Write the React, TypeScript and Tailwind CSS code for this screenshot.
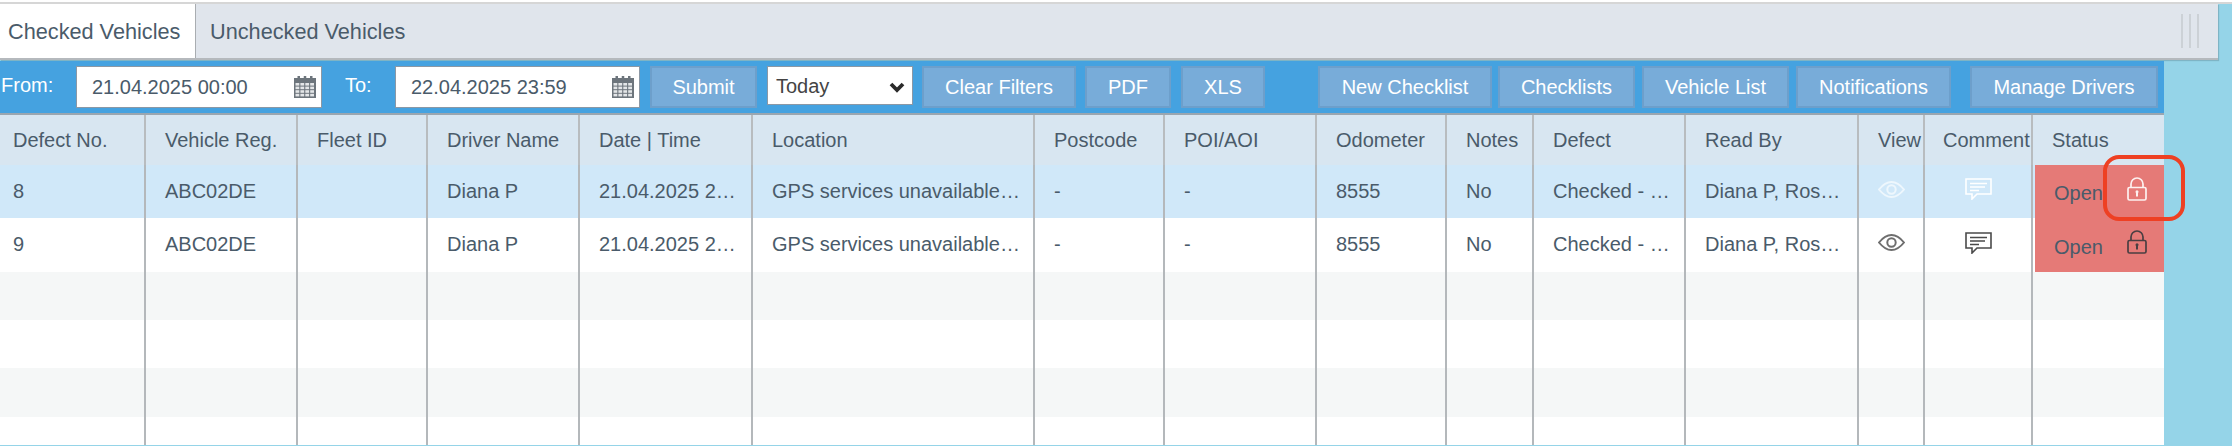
const columns = [
  { label: 'Defect No.', width: 'w-[146px]', pad: 'pl-[13px]' },
  { label: 'Vehicle Reg.', width: 'w-[152px]', pad: 'pl-[19px]' },
  { label: 'Fleet ID', width: 'w-[130px]', pad: 'pl-[19px]' },
  { label: 'Driver Name', width: 'w-[152px]', pad: 'pl-[19px]' },
  { label: 'Date | Time', width: 'w-[173px]', pad: 'pl-[19px]' },
  { label: 'Location', width: 'w-[282px]', pad: 'pl-[19px]' },
  { label: 'Postcode', width: 'w-[130px]', pad: 'pl-[19px]' },
  { label: 'POI/AOI', width: 'w-[152px]', pad: 'pl-[19px]' },
  { label: 'Odometer', width: 'w-[130px]', pad: 'pl-[19px]' },
  { label: 'Notes', width: 'w-[87px]', pad: 'pl-[19px]' },
  { label: 'Defect', width: 'w-[152px]', pad: 'pl-[19px]' },
  { label: 'Read By', width: 'w-[173px]', pad: 'pl-[19px]' },
  { label: 'View', width: 'w-[66px]', pad: 'pl-[19px]' },
  { label: 'Comment', width: 'w-[108px]', pad: 'pl-[18px]' },
  { label: 'Status', width: 'w-[131px]', pad: 'pl-[19px]' }
];

const rows = [
  {
    number: '8',
    height: 'h-[53px]',
    bg: 'bg-[#d0e8f9]',
    eyeColor: 'text-[#eef7fd]',
    commentColor: 'text-white',
    lockColor: 'text-[#fdf1f0]'
  },
  {
    number: '9',
    height: 'h-[54px]',
    bg: 'bg-white',
    eyeColor: 'text-[#6e6e6e]',
    commentColor: 'text-[#4a4a4a]',
    lockColor: 'text-[#4a3f42]'
  }
];

const emptyRows = [
  { height: 'h-[48px]', bg: 'bg-[#f5f7f7]' },
  { height: 'h-[48px]', bg: 'bg-white' },
  { height: 'h-[49px]', bg: 'bg-[#f5f7f7]' },
  { height: 'h-[28px]', bg: 'bg-white' }
];

const CalendarIcon = () => {
  const cells = [0, 1, 2, 3];
  return (
    <svg viewBox="0 0 22 22" className="h-[22px] w-[22px] shrink-0">
      <rect x="0" y="2" width="22" height="20" fill="#6d757c" />
      <rect x="3.5" y="0" width="2.5" height="4.5" fill="#6d757c" />
      <rect x="9.75" y="0" width="2.5" height="4.5" fill="#6d757c" />
      <rect x="16" y="0" width="2.5" height="4.5" fill="#6d757c" />
      {cells.map(r =>
        cells.map(c => (
          <rect
            key={`${r}-${c}`}
            x={1.5 + c * 4.9}
            y={7 + r * 3.6}
            width="3.8"
            height="2.6"
            fill="#e4e6e8"
          />
        ))
      )}
    </svg>
  );
};

const EyeIcon = ({ className }: { className: string }) => (
  <svg viewBox="0 0 27 17" fill="none" stroke="currentColor" className={`h-[17px] w-[27px] ${className}`}>
    <path d="M1 8.5C5 3.5 9 1 13.5 1S22 3.5 26 8.5C22 13.5 18 16 13.5 16S5 13.5 1 8.5Z" strokeWidth="2" />
    <circle cx="13.5" cy="8.5" r="4.2" strokeWidth="2" />
  </svg>
);

const CommentIcon = ({ className }: { className: string }) => (
  <svg viewBox="0 0 27 22" fill="none" stroke="currentColor" strokeWidth="1.6" className={`h-[22px] w-[27px] ${className}`}>
    <path d="M1 1H26V16H12L7 21V16H1Z" />
    <path d="M5 5.5H22M5 9H20M5 12.5H14" />
  </svg>
);

const LockIcon = ({ className }: { className: string }) => (
  <svg viewBox="0 0 20 24" fill="none" stroke="currentColor" strokeWidth="1.7" className={`h-[24px] w-[20px] ${className}`}>
    <path d="M4 11V7a6 6 0 0 1 12 0v4" />
    <rect x="1" y="10.5" width="18" height="12.5" rx="1.5" />
    <circle cx="10" cy="14.8" r="1.5" fill="currentColor" stroke="none" />
    <rect x="9" y="15" width="2" height="4.5" fill="currentColor" stroke="none" />
  </svg>
);

const ToolbarButton = ({ label, className }: { label: string; className: string }) => (
  <button className={`h-[42px] shrink-0 border-2 border-[#6d9fcb] bg-[#78acd9] text-[20px] text-white ${className}`}>
    {label}
  </button>
);

const DateField = ({ value, className }: { value: string; className: string }) => (
  <div className={`flex h-[42px] shrink-0 items-center border border-[#8b98a5] bg-white pl-[15px] pr-[5px] ${className}`}>
    <input
      readOnly
      value={value}
      className="w-full min-w-0 bg-transparent text-[20px] text-[#4a5b6a] outline-none"
    />
    <CalendarIcon />
  </div>
);

const App = () => {
  return (
    <div className="relative h-[446px] w-[2232px] overflow-hidden bg-[#95d4e8] font-['Liberation_Sans',sans-serif] text-[20px] text-[#4a5b6a]">
      <div className="h-[4px] border-b-2 border-[#d6d6d6] bg-white" />

      <div className="flex h-[56px] w-[2218px] items-stretch border-b-2 border-[#b5b9bd] bg-[#e0e5ec] shadow-[1px_1px_1px_rgba(0,0,0,0.15)]">
        <div className="flex w-[196px] items-center border-r border-[#a9adb1] bg-white pl-[8px] pt-[2px] text-[21.7px]">
          Checked Vehicles
        </div>
        <div className="flex items-center pl-[14px] pt-[2px] text-[21.7px]">Unchecked Vehicles</div>
        <div className="ml-auto mr-[19px] flex items-center gap-[6px]">
          <div className="h-[34px] w-[2px] bg-[#ccd1d6]" />
          <div className="h-[34px] w-[2px] bg-[#ccd1d6]" />
          <div className="h-[34px] w-[2px] bg-[#ccd1d6]" />
        </div>
      </div>

      <div className="mt-[1px] flex h-[54px] w-[2164px] items-start border-b-2 border-[#9aa6b0] bg-[#45a2e0] pl-[1px] pt-[5px]">
        <span className="mt-[4px] w-[75px] shrink-0 text-white">From:</span>
        <DateField value="21.04.2025 00:00" className="w-[246px]" />
        <span className="ml-[23px] mt-[4px] w-[50px] shrink-0 text-white">To:</span>
        <DateField value="22.04.2025 23:59" className="w-[245px]" />
        <ToolbarButton label="Submit" className="ml-[10px] w-[107px]" />
        <div className="relative ml-[10px] h-[39px] w-[146px] shrink-0">
          <select className="h-full w-full appearance-none border border-[#8b98a5] bg-white pl-[8px] text-[20px] text-[#444] outline-none">
            <option>Today</option>
          </select>
          <svg viewBox="0 0 16 11" className="pointer-events-none absolute right-[8px] top-[16px] h-[11px] w-[16px]">
            <path d="M2 2L8 8L14 2" fill="none" stroke="#2b2b2b" strokeWidth="3.8" />
          </svg>
        </div>
        <ToolbarButton label="Clear Filters" className="ml-[9px] w-[154px]" />
        <ToolbarButton label="PDF" className="ml-[9px] w-[86px]" />
        <ToolbarButton label="XLS" className="ml-[10px] w-[84px]" />
        <ToolbarButton label="New Checklist" className="ml-[53px] w-[174px]" />
        <ToolbarButton label="Checklists" className="ml-[6px] w-[137px]" />
        <ToolbarButton label="Vehicle List" className="ml-[7px] w-[147px]" />
        <ToolbarButton label="Notifications" className="ml-[7px] w-[155px]" />
        <ToolbarButton label="Manage Drivers" className="ml-[19px] w-[188px]" />
      </div>

      <div className="w-[2164px] bg-white">
        <div className="flex h-[50px] bg-[#d8e6f1]">
          {columns.map((col, i) => (
            <div
              key={col.label}
              className={`flex shrink-0 items-center whitespace-nowrap ${col.width} ${col.pad} ${i < columns.length - 1 ? 'border-r-2 border-[#b8bcbf]' : ''}`}>
              {col.label}
            </div>
          ))}
        </div>

        {rows.map(row => {
          const values = [
            row.number,
            'ABC02DE',
            '',
            'Diana P',
            '21.04.2025 2…',
            'GPS services unavailable…',
            '-',
            '-',
            '8555',
            'No',
            'Checked - …',
            'Diana P, Ros…'
          ];
          return (
            <div key={row.number} className={`flex ${row.height} ${row.bg}`}>
              {values.map((value, i) => (
                <div
                  key={columns[i].label}
                  className={`flex shrink-0 items-center whitespace-nowrap border-r-2 border-[#b4b8bb] pb-[2px] ${columns[i].width} ${columns[i].pad}`}>
                  {value}
                </div>
              ))}
              <div className="flex w-[66px] shrink-0 items-center justify-center border-r-2 border-[#b4b8bb] pb-[5px]">
                <EyeIcon className={row.eyeColor} />
              </div>
              <div className="flex w-[108px] shrink-0 items-center justify-center border-r-2 border-[#b4b8bb] pb-[5px]">
                <CommentIcon className={row.commentColor} />
              </div>
              <div className="ml-[2px] flex w-[129px] shrink-0 items-center justify-between bg-[#e57a77] pl-[19px] pr-[17px]">
                <span className="pt-[3px]">Open</span>
                <span className="mb-[6px] flex">
                  <LockIcon className={row.lockColor} />
                </span>
              </div>
            </div>
          );
        })}

        {emptyRows.map((row, r) => (
          <div key={r} className={`flex ${row.height} ${row.bg}`}>
            {columns.map((col, i) => (
              <div
                key={col.label}
                className={`shrink-0 ${col.width} ${i < columns.length - 1 ? 'border-r-2 border-[#b4b8bb]' : ''}`}
              />
            ))}
          </div>
        ))}
      </div>

      {/* annotation drawn over the screenshot */}
      <div className="absolute left-[2103px] top-[155px] h-[66px] w-[82px] rounded-[16px] border-4 border-[#ee4023]" />
    </div>
  );
};

export default App;
